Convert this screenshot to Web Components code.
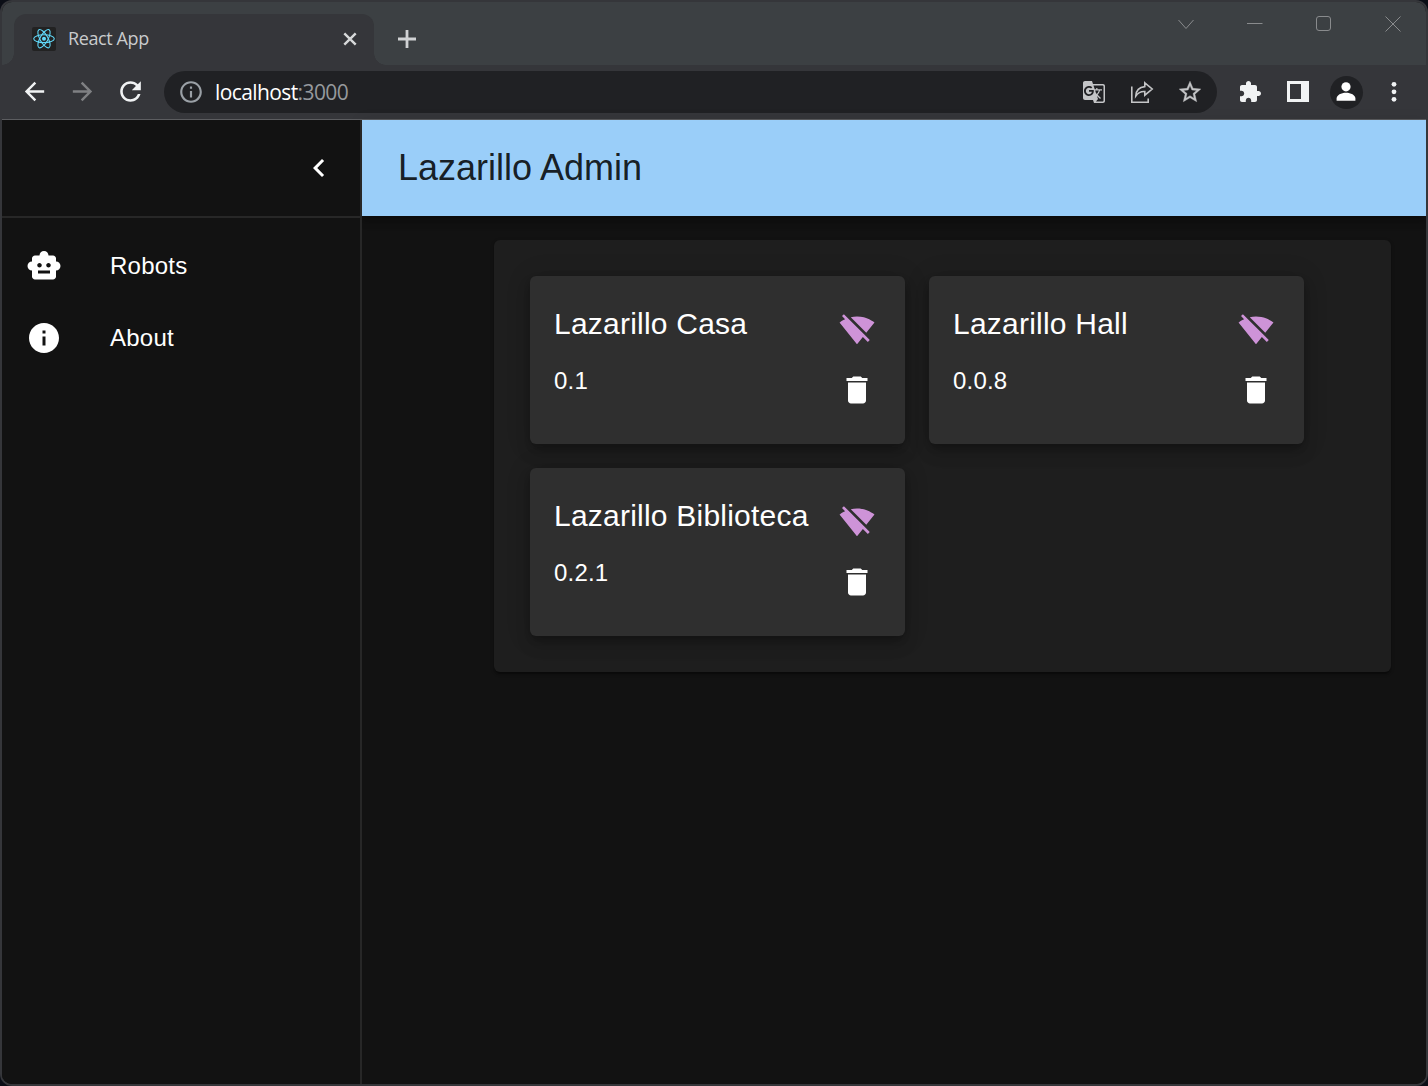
<!DOCTYPE html>
<html lang="en">
<head>
<meta charset="utf-8">
<title>React App</title>
<style>
html,body{margin:0;height:100%;background:#0b0e16;overflow:hidden}
body{font-family:"Liberation Sans",Arial,sans-serif;color:#fff}
</style>
</head>
<body>
<browser-window>
  <tab-strip slot="tabs"><browser-tab>React App</browser-tab></tab-strip>
  <tool-bar slot="toolbar"><span slot="host">localhost</span><span slot="port">:3000</span></tool-bar>
  <admin-page slot="page">
    <side-drawer slot="drawer">
      <nav-item icon="robot">Robots</nav-item>
      <nav-item icon="info">About</nav-item>
    </side-drawer>
    <app-bar slot="bar">Lazarillo Admin</app-bar>
    <robot-panel>
      <robot-card><span slot="name">Lazarillo Casa</span><span slot="version">0.1</span></robot-card>
      <robot-card><span slot="name">Lazarillo Hall</span><span slot="version">0.0.8</span></robot-card>
      <robot-card><span slot="name">Lazarillo Biblioteca</span><span slot="version">0.2.1</span></robot-card>
    </robot-panel>
  </admin-page>
</browser-window>
<script>
const ICONS = {
  robot:'<path d="M20 9V7c0-1.1-.9-2-2-2h-3c0-1.66-1.34-3-3-3S9 3.34 9 5H6c-1.1 0-2 .9-2 2v2c-1.66 0-3 1.34-3 3s1.34 3 3 3v4c0 1.1.9 2 2 2h12c1.1 0 2-.9 2-2v-4c1.66 0 3-1.34 3-3s-1.34-3-3-3zM7.5 11.5c0-.83.67-1.5 1.5-1.5s1.5.67 1.5 1.5S9.83 13 9 13s-1.5-.67-1.5-1.5zM16 17H8v-2h8v2zm-1-4c-.83 0-1.5-.67-1.5-1.5S14.17 10 15 10s1.5.67 1.5 1.5S15.83 13 15 13z"/>',
  info:'<path d="M12 2C6.48 2 2 6.48 2 12s4.48 10 10 10 10-4.48 10-10S17.52 2 12 2zm1 15h-2v-6h2v6zm0-8h-2V7h2v2z"/>',
  infoOutline:'<path d="M11 7h2v2h-2zm0 4h2v6h-2zm1-9C6.48 2 2 6.48 2 12s4.48 10 10 10 10-4.48 10-10S17.52 2 12 2zm0 18c-4.41 0-8-3.59-8-8s3.59-8 8-8 8 3.59 8 8-3.59 8-8 8z"/>',
  chevron:'<path d="M15.41 7.41L14 6l-6 6 6 6 1.41-1.41L10.83 12z"/>',
  wifiOff:'<path d="M23.64 7c-.45-.34-4.93-4-11.64-4-1.5 0-2.89.19-4.15.48L18.18 13.8 23.64 7zm-6.6 8.22L3.27 1.44 2 2.72l2.05 2.06C1.91 5.76.59 6.82.36 7l11.63 14.49.01.01.01-.01 3.9-4.86 3.32 3.32 1.27-1.27-3.46-3.46z"/>',
  trash:'<path d="M6 19c0 1.1.9 2 2 2h8c1.1 0 2-.9 2-2V7H6v12zM19 4h-3.5l-1-1h-5l-1 1H5v2h14V4z"/>',
  back:'<path d="M20 11H7.83l5.59-5.59L12 4l-8 8 8 8 1.41-1.41L7.83 13H20v-2z"/>',
  forward:'<path d="M12 4l-1.41 1.41L16.17 11H4v2h12.17l-5.58 5.59L12 20l8-8z"/>',
  reload:'<path d="M17.65 6.35C16.2 4.9 14.21 4 12 4c-4.42 0-7.99 3.58-7.99 8s3.57 8 7.99 8c3.73 0 6.84-2.55 7.73-6h-2.08c-.82 2.33-3.04 4-5.65 4-3.31 0-6-2.69-6-6s2.69-6 6-6c1.66 0 3.14.69 4.22 1.78L13 11h7V4l-2.35 2.35z"/>',
  translate:'<path d="M21 4H11l-1-3H3c-1.1 0-2 .9-2 2v15c0 1.1.9 2 2 2h8l1 3h9c1.1 0 2-.9 2-2V6c0-1.1-.9-2-2-2zM7 16c-2.76 0-5-2.24-5-5s2.24-5 5-5c1.35 0 2.48.5 3.35 1.3L9.03 8.57c-.38-.36-1.04-.78-2.03-.78-1.74 0-3.15 1.44-3.15 3.21S5.26 14.21 7 14.21c2.01 0 2.84-1.44 2.92-2.41H7v-1.71h4.68c.07.31.12.61.12 1.02C11.8 13.97 9.89 16 7 16zm6.17-5.42h3.7c-.43 1.25-1.11 2.43-2.05 3.47-.31-.35-.6-.72-.86-1.1l-.79-2.37zm8.33 9.92c0 .55-.45 1-1 1H14l2-2.5-1.04-3.1 3.1 3.1.92-.92-3.3-3.25.02-.02c1.13-1.25 1.93-2.69 2.4-4.22H20v-1.3h-4.53V8h-1.29v1.29h-1.44L11.46 5.5h9.04c.55 0 1 .45 1 1v14z"/>',
  share:'<path fill="none" stroke="currentColor" stroke-width="1.6" d="M1.800 6.500v15.700h16.400v-3.700M14.800 2.800l7.400 6.200-7.400 6.200v-3.700c-4.200-.300-6.600 1-9 4.500.3-5.300 3.600-9 9-9.400z"/>',
  star:'<path stroke="currentColor" stroke-width=".35" d="M22 9.240l-7.190-.620L12 2 9.190 8.630 2 9.240l5.460 4.730L5.820 21 12 17.270 18.180 21l-1.630-7.030L22 9.240zM12 15.400l-3.760 2.270 1-4.280-3.320-2.880 4.380-.380L12 6.100l1.710 4.040 4.380.380-3.320 2.880 1 4.280L12 15.400z"/>',
  puzzle:'<path d="M20.500 11H19V7c0-1.100-.900-2-2-2h-4V3.500C13 2.120 11.880 1 10.500 1S8 2.120 8 3.500V5H4c-1.100 0-1.990.900-1.990 2v3.800H3.500c1.490 0 2.700 1.210 2.700 2.700s-1.210 2.700-2.700 2.700H2V20c0 1.100.900 2 2 2h3.800v-1.500c0-1.490 1.210-2.700 2.700-2.700 1.490 0 2.700 1.210 2.700 2.700V22H17c1.100 0 2-.900 2-2v-4h1.500c1.380 0 2.500-1.120 2.500-2.500S21.880 11 20.500 11z"/>',
  panel:'<path fill-rule="evenodd" d="M1 1h22v21H1zM4 4v15h11V4z"/>',
  person:'<circle cx="12" cy="6.800" r="4.600"/><path d="M2.600 20.800v-2.200c0-3.600 4.600-5.800 9.400-5.800s9.400 2.200 9.400 5.800v2.200z"/>',
  dots:'<circle cx="12" cy="4.300" r="2.400"/><circle cx="12" cy="11.800" r="2.400"/><circle cx="12" cy="19.300" r="2.400"/>',
  close:'<path fill="none" stroke="currentColor" stroke-width="2.400" d="M6.300 6.300l11.400 11.400M17.700 6.300L6.300 17.700"/>',
  plus:'<path fill="none" stroke="currentColor" stroke-width="2.800" d="M12 3v18M3 12h18"/>',
  winDown:'<path fill="none" stroke="currentColor" d="M4.500 7l7.500 8.500L19.500 7"/>',
  winMin:'<path fill="none" stroke="currentColor" d="M4 10.500h15.500"/>',
  winMax:'<rect x="4.500" y="3.500" width="14" height="14" rx="2.500" fill="none" stroke="currentColor"/>',
  winClose:'<path fill="none" stroke="currentColor" d="M4.500 3.500l15 15M19.500 3.500l-15 15"/>',
  react:'<rect width="24" height="24" rx="2" fill="#222"/><g fill="none" stroke="#61dafb" stroke-width="1.100"><ellipse cx="12" cy="11.700" rx="10.300" ry="3.900"/><ellipse cx="12" cy="11.700" rx="10.300" ry="3.900" transform="rotate(60 12 11.700)"/><ellipse cx="12" cy="11.700" rx="10.300" ry="3.900" transform="rotate(120 12 11.700)"/></g><circle cx="12" cy="11.700" r="2" fill="#61dafb"/>'
};
function define(name, css, html){
  customElements.define(name, class extends HTMLElement{
    constructor(){
      super();
      this.attachShadow({mode:'open'}).innerHTML = `<style>*{box-sizing:border-box}${css}</style>${html}`;
    }
  });
}
customElements.define('ui-icon', class extends HTMLElement{
  static observedAttributes = ['name','size'];
  constructor(){ super(); this.attachShadow({mode:'open'}); }
  attributeChangedCallback(){
    const s = this.getAttribute('size') || 36;
    this.shadowRoot.innerHTML = `<style>:host{display:block;flex:none}svg{display:block;fill:currentColor}</style><svg width="${s}" height="${s}" viewBox="0 0 24 24">${ICONS[this.getAttribute('name')]||''}</svg>`;
  }
});
define('browser-window',
  `:host{display:flex;flex-direction:column;box-sizing:border-box;width:1428px;height:1086px;border:2px solid #35363a;border-radius:12px;overflow:hidden;background:#121212}
   ::slotted([slot=page]){flex:1;min-height:0}`,
  `<slot name="tabs"></slot><slot name="toolbar"></slot><slot name="page"></slot>`);
define('tab-strip',
  `:host{display:flex;box-sizing:border-box;height:63px;flex:none;background:#3c4043;padding:12px 0 0 12px}
   .plus{margin:13px 0 0 21px;color:#d0d2d4}
   .controls{margin:-1px 21px 0 auto;display:flex;gap:45px;color:#898b8d}`,
  `<slot></slot><ui-icon class="plus" name="plus" size="24"></ui-icon>
   <div class="controls"><ui-icon name="winDown" size="24"></ui-icon><ui-icon name="winMin" size="24"></ui-icon><ui-icon name="winMax" size="24"></ui-icon><ui-icon name="winClose" size="24"></ui-icon></div>`);
define('browser-tab',
  `:host{display:flex;align-items:center;box-sizing:border-box;position:relative;width:360px;height:51px;padding:0 12px 1px 18px;background:#35363a;border-radius:12px 12px 0 0;font:18px "Open Sans",sans-serif;color:#c9cbcd}
   :host::before,:host::after{content:"";position:absolute;bottom:0;width:12px;height:12px}
   :host::before{left:-12px;background:radial-gradient(circle at 0 0,transparent 11.500px,#35363a 12px)}
   :host::after{right:-12px;background:radial-gradient(circle at 100% 0,transparent 11.500px,#35363a 12px)}
   .t{margin-left:12px;padding-bottom:2px;flex:1;letter-spacing:-.400px}
   .x{color:#d6d8d9}`,
  `<ui-icon name="react" size="24"></ui-icon><span class="t"><slot></slot></span><ui-icon class="x" name="close" size="24"></ui-icon>`);
define('tool-bar',
  `:host{display:flex;align-items:center;box-sizing:border-box;height:55px;flex:none;background:#35363a;border-bottom:1px solid #5c5d60;padding-left:9px;color:#f1f3f4}
   .b{width:48px;height:48px;display:grid;place-items:center}
   .nav{padding:0 1px 1px 0}
   .dim{color:#7f8083}
   .omni{display:flex;align-items:center;width:1053px;height:42px;margin-left:9px;border-radius:21px;background:#202124;padding:0 3px 0 14px;color:#9aa0a6}
   .url{flex:1;margin-left:11px;font:21px "Open Sans",sans-serif;letter-spacing:-.600px;white-space:nowrap}
   .h{color:#fff}.p{color:#96999d}
   .g{color:#c4c5c7}
   .first{margin-left:9px}
   .av{width:33px;height:33px;border-radius:50%;background:#202124;display:grid;place-items:center;color:#fff}`,
  `<div class="b nav"><ui-icon name="back" size="29"></ui-icon></div><div class="b nav dim"><ui-icon name="forward" size="29"></ui-icon></div><div class="b nav"><ui-icon name="reload" size="31"></ui-icon></div>
   <div class="omni"><ui-icon name="infoOutline" size="26"></ui-icon><div class="url"><span class="h"><slot name="host"></slot></span><span class="p"><slot name="port"></slot></span></div>
   <div class="b g"><ui-icon name="translate" size="24"></ui-icon></div><div class="b g"><ui-icon name="share" size="24"></ui-icon></div><div class="b g"><ui-icon name="star" size="26"></ui-icon></div></div>
   <div class="b first"><ui-icon name="puzzle" size="24"></ui-icon></div><div class="b"><ui-icon name="panel" size="24"></ui-icon></div><div class="b"><div class="av"><ui-icon name="person" size="24"></ui-icon></div></div><div class="b"><ui-icon name="dots" size="24"></ui-icon></div>`);
define('admin-page',
  `:host{display:flex;background:#121212}
   main{flex:1;min-width:0;display:flex;flex-direction:column}
   .content{padding:24px 35px 0 132px}`,
  `<slot name="drawer"></slot><main><slot name="bar"></slot><div class="content"><slot></slot></div></main>`);
define('side-drawer',
  `:host{display:flex;flex-direction:column;box-sizing:border-box;position:relative;z-index:1;width:360px;flex:none;border-right:2px solid #272727;background:#121212}
   header{height:98px;display:flex;align-items:center;justify-content:flex-end;padding-right:23px;border-bottom:2px solid #272727}
   nav{padding-top:12px}`,
  `<header><ui-icon name="chevron"></ui-icon></header><nav><slot></slot></nav>`);
define('nav-item',
  `:host{display:flex;align-items:center;height:72px;padding-left:24px;font-size:24px;letter-spacing:.225px}
   span{margin-left:48px}`,
  `<ui-icon></ui-icon><span><slot></slot></span>`);
document.querySelectorAll('nav-item').forEach(n=>n.shadowRoot.querySelector('ui-icon').setAttribute('name',n.getAttribute('icon')));
define('app-bar',
  `:host{display:flex;align-items:center;box-sizing:border-box;height:96px;flex:none;padding-left:36px;background:#9acef9;color:rgba(0,0,0,.87);font-size:36px;box-shadow:0 3px 6px -1.500px rgba(0,0,0,.2),0 6px 7.500px rgba(0,0,0,.14),0 1.500px 15px rgba(0,0,0,.12)}`,
  `<slot></slot>`);
define('robot-panel',
  `:host{display:flex;flex-wrap:wrap;gap:24px;box-sizing:border-box;padding:36px;border-radius:6px;background:#1e1e1e;box-shadow:0 3px 1.500px -1.500px rgba(0,0,0,.2),0 1.500px 1.500px rgba(0,0,0,.14),0 1.500px 4.500px rgba(0,0,0,.12)}`,
  `<slot></slot>`);
define('robot-card',
  `:host{display:flex;justify-content:space-between;box-sizing:border-box;width:375px;height:168px;padding:24px 30px 24px 24px;border-radius:6px;background:#2f2f2f;box-shadow:0 4.500px 7.500px -1.500px rgba(0,0,0,.2),0 9px 15px 0 rgba(0,0,0,.14),0 1.500px 27px 0 rgba(0,0,0,.12)}
   .name{font-size:30px;line-height:48px;letter-spacing:.225px;white-space:nowrap}
   .ver{font-size:24px;line-height:36px;letter-spacing:.200px;margin-top:15px}
   .act{display:flex;flex-direction:column;gap:24px;padding-top:12px}
   .wifi{color:#ce93d8}`,
  `<div><div class="name"><slot name="name"></slot></div><div class="ver"><slot name="version"></slot></div></div>
   <div class="act"><ui-icon class="wifi" name="wifiOff"></ui-icon><ui-icon name="trash"></ui-icon></div>`);
</script>
</body>
</html>
